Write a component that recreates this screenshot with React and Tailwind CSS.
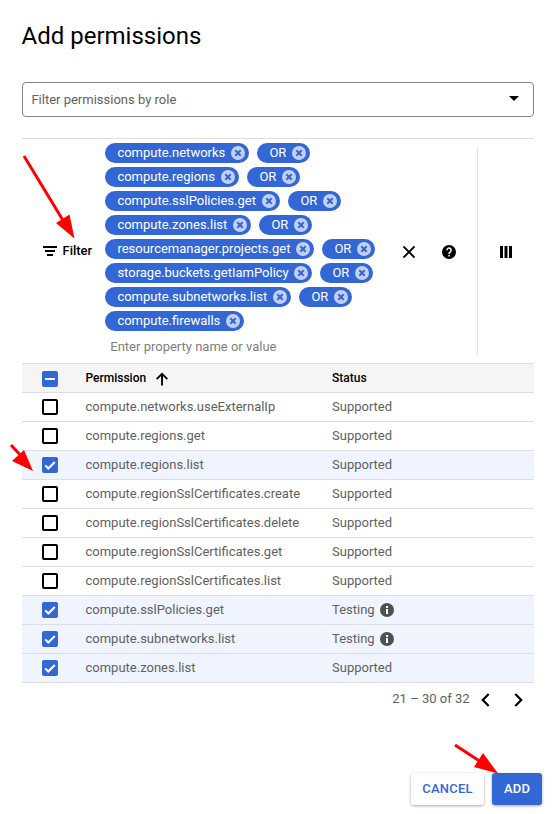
const filterRows = [
  { name: 'compute.networks', width: 'w-36' },
  { name: 'compute.regions', width: 'w-[134px]' },
  { name: 'compute.sslPolicies.get', width: 'w-[175px]' },
  { name: 'compute.zones.list', width: 'w-[146px]' },
  { name: 'resourcemanager.projects.get', width: 'w-[209px]' },
  { name: 'storage.buckets.getIamPolicy', width: 'w-[207px]' },
  { name: 'compute.subnetworks.list', width: 'w-[186px]' },
  { name: 'compute.firewalls', width: 'w-[139px]', last: true },
];

const permissions = [
  { name: 'compute.networks.useExternalIp' },
  { name: 'compute.regions.get' },
  { name: 'compute.regions.list', checked: true },
  { name: 'compute.regionSslCertificates.create' },
  { name: 'compute.regionSslCertificates.delete' },
  { name: 'compute.regionSslCertificates.get' },
  { name: 'compute.regionSslCertificates.list' },
  { name: 'compute.sslPolicies.get', checked: true, testing: true },
  { name: 'compute.subnetworks.list', checked: true, testing: true },
  { name: 'compute.zones.list', checked: true },
];

function Chip({ label, width }) {
  return (
    <span className={`flex h-5 shrink-0 items-center justify-between rounded-full bg-[#3367d6] pr-1 pl-[12.4px] text-white ${width}`}>
      <span className="whitespace-nowrap">{label}</span>
      <svg className="h-3.5 w-3.5 shrink-0" viewBox="0 0 14 14">
        <circle cx="7" cy="7" r="7" fill="#c2d1f3" />
        <path d="M4.3 4.3l5.4 5.4M9.7 4.3L4.3 9.7" stroke="#3367d6" strokeWidth="2" />
      </svg>
    </span>
  );
}

function Checkbox({ state }) {
  if (!state) return <span className="block h-4 w-4 rounded-[2px] border-2 border-black bg-white" />;
  return (
    <span className="block h-4 w-4 rounded-[2px] bg-[#3367d6]">
      <svg className="h-4 w-4" viewBox="0 0 16 16" fill="none" stroke="#fff" strokeWidth="2">
        {state === 'mixed' ? <path d="M3 8h10" /> : <path d="M3.2 8.4l3.1 3.1L12.8 5" />}
      </svg>
    </span>
  );
}

function InfoIcon() {
  return (
    <svg className="ml-[5px] h-3.5 w-3.5" viewBox="0 0 14 14">
      <circle cx="7" cy="7" r="7" fill="#505050" />
      <path d="M6 3h2v2H6zM6 6h2v5H6z" fill="#fff" />
    </svg>
  );
}

function Arrow({ className, w, h, x, y, head }) {
  return (
    <svg className={`absolute ${className}`} width={w} height={h} viewBox={`0 0 ${w} ${h}`}>
      <path d={`M2 2L${x} ${y}`} stroke="#f00" strokeWidth="3" />
      <polygon points={head} fill="#f00" />
    </svg>
  );
}

export default function App() {
  return (
    <div className="relative h-[814px] w-[552px] overflow-hidden bg-white font-['Roboto',sans-serif] text-[13px] leading-5 text-[#616161]">
      <h1 className="ml-[21.5px] pt-5 text-2xl leading-8 text-black">Add permissions</h1>

      <div className="mx-[22px] mt-[30px] flex h-[35px] w-[512px] items-center justify-between rounded border border-[#80868b] pr-3.5 pl-[8.4px]">
        <span>Filter permissions by role</span>
        <svg className="mb-0.5 h-[5px] w-2.5" viewBox="0 0 10 5"><path d="M0 0h10L5 5z" fill="#000" /></svg>
      </div>

      <section className="mx-[22px] mt-[21px] flex h-[225px] w-[512px] border-t border-[#dedede]">
        <div className="flex w-[83px] items-center pl-[21px] text-black">
          <svg className="h-2.5 w-3.5" viewBox="0 0 14 10"><path d="M0 0h14v2H0zM2 4h10v2H2zM4 8h6v2H4z" /></svg>
          <span className="ml-[5.5px] font-medium">Filter</span>
        </div>
        <div className="flex w-[294px] flex-col gap-1 pt-1">
          {filterRows.map((row) => (
            <div key={row.name} className="flex gap-2">
              <Chip label={row.name} width={row.width} />
              {!row.last && <Chip label="OR" width="w-[53px]" />}
            </div>
          ))}
          <span className="mt-0.5 ml-[5.3px] text-[#808080]">Enter property name or value</span>
        </div>
        <div className="my-2 flex w-[79px] items-center border-r border-[#e4e4e4] pl-1">
          <svg className="mt-0.5 h-3 w-3" viewBox="0 0 12 12"><path d="M.4.4l11.2 11.2M11.6.4L.4 11.6" stroke="#000" strokeWidth="1.9" /></svg>
          <svg className="mt-0.5 ml-[27px] h-3.5 w-3.5" viewBox="0 0 14 14">
            <circle cx="7" cy="7" r="7" />
            <path d="M4.9 5.3a2.1 2.1 0 1 1 3.5 1.5C7.5 7.5 7 7.9 7 9M7 10v1.5" fill="none" stroke="#fff" strokeWidth="1.5" />
          </svg>
        </div>
        <div className="flex items-center pl-[22px]">
          <svg className="mt-0.5 h-3 w-3" viewBox="0 0 12 12"><path d="M0 0h3v12H0zM4.5 0h3v12h-3zM9 0h3v12H9z" /></svg>
        </div>
      </section>

      <div className="mx-[22px] w-[512px] border-b border-[#dedede]">
        <div className="flex h-[29px] items-center border-t border-[#dedede] bg-[#f5f5f5] text-xs font-medium text-black">
          <div className="w-[63.5px] pt-0.5 pl-5"><Checkbox state="mixed" /></div>
          <div className="flex w-[246.5px] items-center">
            Permission
            <svg className="mt-0.5 ml-2.5 h-3.5 w-3" viewBox="0 0 12 14"><path d="M6 13.5V2M.6 7.2L6 1.8l5.4 5.4" fill="none" stroke="#000" strokeWidth="1.9" /></svg>
          </div>
          <div>Status</div>
        </div>
        {permissions.map((p) => (
          <div key={p.name} className={`flex h-[29px] items-center border-t border-[#dedede] ${p.checked ? 'bg-[#f0f4ff]' : 'bg-white'}`}>
            <div className="w-[63.5px] pl-5"><Checkbox state={p.checked} /></div>
            <div className="w-[246.5px]">{p.name}</div>
            <div className="flex items-center">
              {p.testing ? 'Testing' : 'Supported'}
              {p.testing && <InfoIcon />}
            </div>
          </div>
        ))}
      </div>

      <div className="mt-1.5 mr-[29px] flex h-5 items-center justify-end">
        <span>21 – 30 of 32</span>
        <svg className="mt-0.5 ml-[11.5px] h-3.5 w-[9px]" viewBox="0 0 9 14"><path d="M7.7 1L1.8 7l5.9 6" fill="none" stroke="#000" strokeWidth="2.2" /></svg>
        <svg className="mt-0.5 ml-6 h-3.5 w-[9px]" viewBox="0 0 9 14"><path d="M1.3 1l5.9 6-5.9 6" fill="none" stroke="#000" strokeWidth="2.2" /></svg>
      </div>

      <div className="mt-16 mr-2.5 flex justify-end gap-2 font-medium tracking-[0.2px]">
        <button className="h-8 w-[73px] rounded-[3px] bg-white text-[#3367d6] shadow-[0_1px_3px_rgba(0,0,0,0.35)]">CANCEL</button>
        <button className="h-8 w-[50px] rounded-[3px] bg-[#3367d6] text-white shadow-[0_1px_3px_rgba(0,0,0,0.35)]">ADD</button>
      </div>

      <Arrow className="top-[154px] left-[22px]" w={54} h={86} x={42} y={68} head="52.5,84.5 34,69 47.5,60.5" />
      <Arrow className="top-[443px] left-[9px]" w={25} h={28} x={16} y={17} head="24,28 3,18 15,7" />
      <Arrow className="top-[743px] left-[453px]" w={45} h={31} x={28} y={19} head="45,30.5 21,24 30,10" />
    </div>
  );
}
